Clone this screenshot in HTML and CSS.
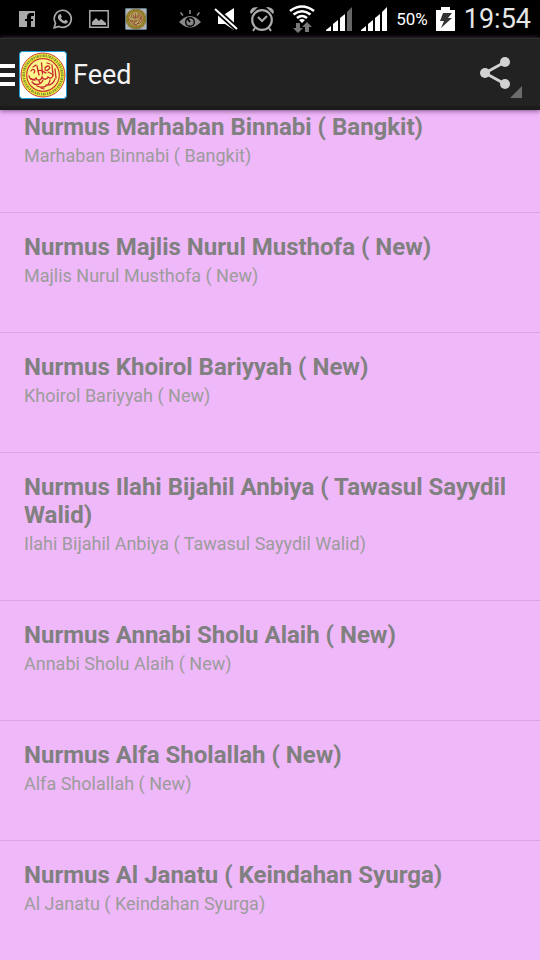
FILE: index.html
```html
<!DOCTYPE html>
<html lang="id">
<head>
<meta charset="utf-8">
<meta name="viewport" content="width=device-width, initial-scale=1">
<title>Feed</title>
<link rel="stylesheet" href="styles.css">
</head>
<body>
<svg class="defs" width="0" height="0" aria-hidden="true">
  <symbol id="emblem" viewBox="0 0 48 48">
    <rect x=".5" y=".5" width="47" height="47" rx="3" fill="#fff" stroke="#1ba1e2"/>
    <circle cx="24" cy="24" r="22" fill="#f3ec3a" stroke="#c9403a" stroke-width="1"/>
    <circle cx="24" cy="24" r="19.300" fill="none" stroke="#7d8c3c" stroke-width="2.600" stroke-dasharray="1.200 1 .8 .7 1.600 .9"/>
    <circle cx="24" cy="24" r="16.300" fill="#fbf78c" stroke="#cf3a34" stroke-width="1.200"/>
    <g fill="none" stroke="#c9282c" stroke-width="1.300" stroke-linecap="round">
      <path d="M10 25c1 4 5 5 7 2 1 3 5 3 6-1 1 3 5 3 6 0 2 2 5 1 5-2"/>
      <path d="M12 20c2-3 5-1 3 2M18 15l2 9M22.500 12l1 11M26 17c3-4 6-1 4 1s-4 2-4 0M33 14l1 10M36 18l1 9"/>
      <path d="M13 31c3 4 9 3 11-2M18 35c6 3 12 0 13-6M27 34c4 1 8-2 9-6M19 20c3-2 5 1 8 2M14 16l3-2M28 12l3 1M22 37l3 1M12 28l4 1M29 21l4 2M20 30l1 2"/>
    </g>
  </symbol>
</svg>
<div class="status">
  <div class="group notices">
    <svg width="18" height="16" viewBox="0 0 18 16"><path fill="#aaa" d="M0 0h16v16h-4v-6h2V8h-2V6q0-1 1-1h2V2h-3Q8 2 8 6v2H6v2h2v6H0z"/></svg>
    <svg width="20" height="20" viewBox="0 0 20 20"><path fill="none" stroke="#aaa" stroke-width="1.7" d="M1.2 18.8l1.3-4.6A8.5 8.5 0 1 1 6 17.4z"/><path fill="#aaa" d="M6.5 5.2l1.2-.1 1.2 2.7-1 1.3q1.1 2.2 3.2 3l1.3-1.3 2.5 1.3q0 2.4-2.6 2.7-2.5 0-5.3-2.8T5 7.2q.3-1.500 1.500-2z"/></svg>
    <svg width="20" height="18" viewBox="0 0 20 18"><path fill="none" stroke="#aaa" stroke-width="1.500" d="M.8.8h18.4v16.4H.8z"/><path fill="#aaa" d="M3 15v-3l4-4 3 3 2-2 5 4v2z"/></svg>
    <svg class="dim" width="22" height="22"><use href="#emblem"/></svg>
  </div>
  <div class="group system">
    <div class="group modes">
      <svg width="23" height="18" viewBox="0 0 23 18"><path fill="#888" d="M0 12Q11 0 22 12 11 23 0 12z"/><circle cx="11" cy="12" r="5" fill="#000"/><circle cx="11" cy="12" r="3.600" fill="#888"/><path stroke="#000" stroke-width="1.800" d="M8 8l3 4"/><path stroke="#888" stroke-width="1.600" d="M11 0v4M1.500 2.500L4 5.500M20.500 2.500L18 5.500"/></svg>
      <svg width="22" height="24" viewBox="0 0 22 24"><path fill="#fff" d="M3 7h7l9-6v22l-9-6H3z"/><path stroke="#000" stroke-width="5.500" d="M0 2l22 20"/><path stroke="#fff" stroke-width="2" d="M0 2l22 20"/></svg>
      <svg width="26" height="26" viewBox="0 0 26 26"><g fill="none" stroke="#aaa"><circle cx="12" cy="14" r="9.800" stroke-width="2.200"/><path stroke-width="2" d="M8 11l4 4 5-5M5 22l-2 3M19 22l2 3"/></g><path fill="#aaa" d="M0 6q1-5 8-5L1 8zM24 6q-1-5-8-5l7 7z"/></svg>
      <svg width="26" height="28" viewBox="0 0 26 28"><g fill="none" stroke="#fff" stroke-width="2.600"><path d="M1 6q12-9 24 0M4.500 9.500q8.500-6.500 17 0M8 13q5-4 10 0"/></g><path fill="#fff" d="M10 15q3-2 6 0l-3 3z"/><path fill="#777" d="M7 18h4v5h3l-5 5-5-5h3zM16 27h4v-5h3l-5-5-5 5h3z"/></svg>
    </div>
    <svg width="27" height="24" viewBox="0 0 27 24"><path fill="#fff" d="M0 24v-1l5-4v5zM7 24v-7l5-4v11zM14 24V11l5-4v17z"/><path fill="#666" d="M21 24V5l5-5v24z"/></svg>
    <svg width="27" height="24" viewBox="0 0 27 24"><path fill="#fff" d="M0 24v-1l5-4v5zM7 24v-7l5-4v11zM14 24V11l5-4v17zM21 24V5l5-5v24z"/></svg>
    <span class="percent">50%</span>
    <svg width="20" height="24" viewBox="0 0 20 24"><path fill="#fff" d="M0 3h5V0h9v3h5v21H0z"/><path fill="#333" d="M7 6h9l-4 5h4L5 21l3-7H4z"/></svg>
    <time class="clock">19:54</time>
  </div>
</div>
<header class="bar">
  <button class="menu" aria-label="Menu">
    <svg width="15" height="24" viewBox="0 0 15 24"><path fill="#fff" d="M0 1h15v4H0zM0 10h15v4H0zM0 19h15v4H0z"/></svg>
    <svg width="48" height="48"><use href="#emblem"/></svg>
  </button>
  <h1>Feed</h1>
  <button class="share" aria-label="Share">
    <svg width="44" height="48" viewBox="0 0 44 48"><path fill="none" stroke="#d2d2d2" stroke-width="2.800" d="M27 11L7 22l20 11"/><g fill="#d2d2d2"><circle cx="27" cy="11" r="5"/><circle cx="7" cy="22" r="5"/><circle cx="27" cy="33" r="5"/></g><path fill="#6b6b6b" d="M44 35v12H32z"/></svg>
  </button>
</header>
<main>
  <ul class="feed">
    <li><h2>Nurmus Marhaban Binnabi ( Bangkit)</h2><p>Marhaban Binnabi ( Bangkit)</p></li>
    <li><h2>Nurmus Majlis Nurul Musthofa ( New)</h2><p>Majlis Nurul Musthofa ( New)</p></li>
    <li><h2>Nurmus Khoirol Bariyyah ( New)</h2><p>Khoirol Bariyyah ( New)</p></li>
    <li><h2>Nurmus Ilahi Bijahil Anbiya ( Tawasul Sayydil Walid)</h2><p>Ilahi Bijahil Anbiya ( Tawasul Sayydil Walid)</p></li>
    <li><h2>Nurmus Annabi Sholu Alaih ( New)</h2><p>Annabi Sholu Alaih ( New)</p></li>
    <li><h2>Nurmus Alfa Sholallah ( New)</h2><p>Alfa Sholallah ( New)</p></li>
    <li><h2>Nurmus Al Janatu ( Keindahan Syurga)</h2><p>Al Janatu ( Keindahan Syurga)</p></li>
  </ul>
</main>
</body>
</html>
```
FILE: styles.css
```css
* { box-sizing: border-box; margin: 0; padding: 0; }
body {
  display: flex;
  flex-direction: column;
  height: 100vh;
  overflow: hidden;
  background: #efb8f9;
  font-family: Roboto, sans-serif;
}
svg { display: block; flex: none; overflow: visible; }
.defs { position: absolute; }
button { border: 0; background: none; }
.status {
  display: flex;
  flex: none;
  justify-content: space-between;
  height: 38px;
  padding: 0 9px 0 19px;
  background: #000;
  color: #e6e6e6;
}
.group { display: flex; align-items: center; }
.notices { gap: 16px; }
.system { gap: 8px; }
.modes { gap: 13px; margin-right: 3px; }
.dim { opacity: .7; }
.percent { font-size: 17px; color: #fff; }
.clock { font-size: 27px; }
.bar {
  display: flex;
  flex: none;
  align-items: center;
  height: 72px;
  padding-right: 18px;
  border-top: 1px solid #2e2e2e;
  background: #222;
  box-shadow: inset 0 -4px #1b1b1b, 0 1px 5px #80508a;
  z-index: 1;
}
.menu { display: flex; align-items: center; gap: 4px; }
h1 {
  flex: 1;
  margin-left: 6px;
  font-size: 27px;
  font-weight: 400;
  color: #f3f3f3;
}
main { flex: 1; min-height: 0; overflow: hidden; }
.feed { margin-top: -17px; list-style: none; }
.feed li {
  padding: 20px 24px 45px;
  border-bottom: 1px solid #d9a4e4;
}
.feed h2 {
  font-size: 24px;
  line-height: 28px;
  font-weight: 700;
  color: #808080;
}
.feed p {
  margin-top: 4px;
  font-size: 18px;
  line-height: 22px;
  color: #9c9c9c;
}
```
